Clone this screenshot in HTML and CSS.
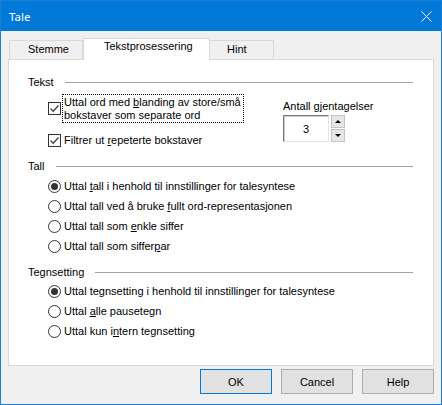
FILE: index.html
```html
<!DOCTYPE html>
<html>
<head>
<meta charset="utf-8">
<title>Tale</title>
<link rel="stylesheet" href="styles.css">
</head>
<body>
<div class="window">
  <div class="titlebar">
    <span class="title">Tale</span>
    <svg class="close" width="11" height="11" viewBox="0 0 11 11"><path d="M0.5 0.5L10.5 10.5M10.5 0.5L0.5 10.5" stroke="#fff" stroke-width="1"/></svg>
  </div>
  <div class="tabs">
    <div class="tab t1">Stemme</div>
    <div class="tab active">Tekstprosessering</div>
    <div class="tab t3">Hint</div>
  </div>
  <div class="panel">
    <div class="group-head"><span>Tekst</span><i class="rule"></i></div>
    <div class="tekst-body">
      <div class="col-left">
        <div class="opt">
          <span class="cb cb-focus"><svg width="11" height="11" viewBox="0 0 11 11"><path d="M1.5 5.5L4.2 8.2L9.5 2.5" fill="none" stroke="#444" stroke-width="1.3"/></svg></span>
          <span class="focus">Uttal ord med <u>b</u>landing av store/små<br>bokstaver som separate ord</span>
        </div>
        <div class="opt row2">
          <span class="cb"><svg width="11" height="11" viewBox="0 0 11 11"><path d="M1.5 5.5L4.2 8.2L9.5 2.5" fill="none" stroke="#444" stroke-width="1.3"/></svg></span>
          <span>Filtrer ut <u>r</u>epeterte bokstaver</span>
        </div>
      </div>
      <div class="col-right">
        <div class="spin-label">Antall gjentagelser</div>
        <div class="spin">
          <div class="edit">3</div>
          <div class="arrows">
            <div class="arr"><i class="tri-up"></i></div>
            <div class="arr"><i class="tri-down"></i></div>
          </div>
        </div>
      </div>
    </div>

    <div class="group-head gh2"><span>Tall</span><i class="rule"></i></div>
    <div class="radios r-first">
      <div class="opt"><span class="rb on"></span><span>Uttal <u>t</u>all i henhold til innstillinger for talesyntese</span></div>
      <div class="opt"><span class="rb"></span><span>Uttal tall ved å bruke <u>f</u>ullt ord-representasjonen</span></div>
      <div class="opt"><span class="rb"></span><span>Uttal tall som <u>e</u>nkle siffer</span></div>
      <div class="opt"><span class="rb"></span><span>Uttal tall som siffer<u>p</u>ar</span></div>
    </div>

    <div class="group-head gh2"><span>Tegnsetting</span><i class="rule"></i></div>
    <div class="radios r-second">
      <div class="opt"><span class="rb on"></span><span>Uttal te<u>g</u>nsetting i henhold til innstillinger for talesyntese</span></div>
      <div class="opt"><span class="rb"></span><span>Uttal <u>a</u>lle pausetegn</span></div>
      <div class="opt"><span class="rb"></span><span>Uttal kun i<u>n</u>tern tegnsetting</span></div>
    </div>
  </div>
  <div class="footer">
    <button class="btn default">OK</button>
    <button class="btn">Cancel</button>
    <button class="btn">Help</button>
  </div>
</div>
</body>
</html>
```
FILE: styles.css
```css
html, body {
  margin: 0;
  padding: 0;
  background: #ffffff;
}
body {
  font-family: "Liberation Sans", Arial, sans-serif;
  font-size: 11px;
  line-height: 13px;
  color: #000;
}
.window {
  width: 442px;
  height: 405px;
  box-sizing: border-box;
  border: 1px solid #1a7fd4;
  background: #f0f0f0;
}
.titlebar {
  height: 30px;
  background: #0078d7;
  display: flex;
  align-items: center;
  justify-content: space-between;
  padding: 0 9px 0 8px;
  color: #fff;
}
.title {
  font-family: "Noto Sans", "Liberation Sans", sans-serif;
  font-size: 11.5px;
}
.close {
  display: block;
}
.tabs {
  display: flex;
  align-items: flex-end;
  height: 21px;
  margin-top: 7px;
  padding-left: 8px;
}
.tab {
  box-sizing: border-box;
  height: 19px;
  border: 1px solid #d9d9d9;
  border-bottom: none;
  background: #f0f0f0;
  padding: 2px 0 0 18px;
  white-space: nowrap;
}
.t1 { width: 74px; }
.t3 { width: 64px; padding-left: 17px; border-left: none; }
.active {
  width: 127px;
  height: 22px;
  background: #fff;
  margin-bottom: -1px;
  position: relative;
  z-index: 1;
  padding: 1px 0 0 20px;
}
.panel {
  position: relative;
  z-index: 0;
  margin: 0 7px;
  height: 307px;
  box-sizing: border-box;
  border: 1px solid #d9d9d9;
  background: #fff;
  padding: 16px 20px 0 19px;
}
.group-head {
  display: flex;
  align-items: center;
  height: 13px;
}
.rule {
  flex: 1;
  height: 1px;
  background: #a0a0a0;
  margin-left: 11px;
}
.gh2 { margin-top: 13px; }
.tekst-body {
  display: flex;
  margin-top: 5px;
}
.col-left {
  width: 255px;
}
.opt {
  display: flex;
  align-items: center;
  margin-left: 20px;
  white-space: nowrap;
}
.row2 { margin-top: 11px; }
.cb {
  flex: none;
  width: 13px;
  height: 13px;
  box-sizing: border-box;
  border: 1px solid #333;
  background: #fff;
  margin-right: 3px;
}
.cb svg { display: block; }
.cb-focus { margin-right: 1px; }
.focus {
  border: 1px dotted #000;
  padding: 1px 1px 0 1px;
  width: 178px;
}
.col-right {
  padding-top: 6px;
}
.spin {
  display: flex;
  margin-top: 2px;
}
.edit {
  box-sizing: border-box;
  width: 46px;
  height: 27px;
  border: 1px solid;
  border-color: #7a7a7a #e3e3e3 #e3e3e3 #7a7a7a;
  box-shadow: inset 1px 1px 0 #c8c8c8;
  background: #fff;
  display: flex;
  align-items: center;
  justify-content: center;
  padding-top: 1px;
}
.arrows {
  display: flex;
  flex-direction: column;
  gap: 1px;
  margin-left: 2px;
}
.arr {
  box-sizing: border-box;
  width: 14px;
  height: 13px;
  background: #e6e6e6;
  border: 1px solid #c4c4c4;
  display: flex;
  align-items: center;
  justify-content: center;
}
.tri-up {
  width: 0;
  height: 0;
  border-left: 3px solid transparent;
  border-right: 3px solid transparent;
  border-bottom: 3px solid #000;
}
.tri-down {
  width: 0;
  height: 0;
  border-left: 3px solid transparent;
  border-right: 3px solid transparent;
  border-top: 3px solid #000;
}
.r-first { margin-top: 7px; }
.r-second { margin-top: 6px; }
.radios .opt + .opt { margin-top: 7px; }
.rb {
  flex: none;
  width: 13px;
  height: 13px;
  box-sizing: border-box;
  border: 1px solid #333;
  border-radius: 50%;
  background: #fff;
  margin-right: 3px;
  display: flex;
  align-items: center;
  justify-content: center;
}
.rb.on::after {
  content: "";
  width: 7px;
  height: 7px;
  border-radius: 50%;
  background: #333;
}
.footer {
  display: flex;
  justify-content: flex-end;
  gap: 9px;
  margin-top: 3px;
  padding-right: 7px;
}
.btn {
  box-sizing: border-box;
  width: 72px;
  height: 25px;
  border: 1px solid #adadad;
  background: #e1e1e1;
  font-family: "Liberation Sans", Arial, sans-serif;
  font-size: 11px;
  color: #000;
  padding: 0;
  margin: 0;
}
.btn.default {
  border-color: #0078d7;
}
```
